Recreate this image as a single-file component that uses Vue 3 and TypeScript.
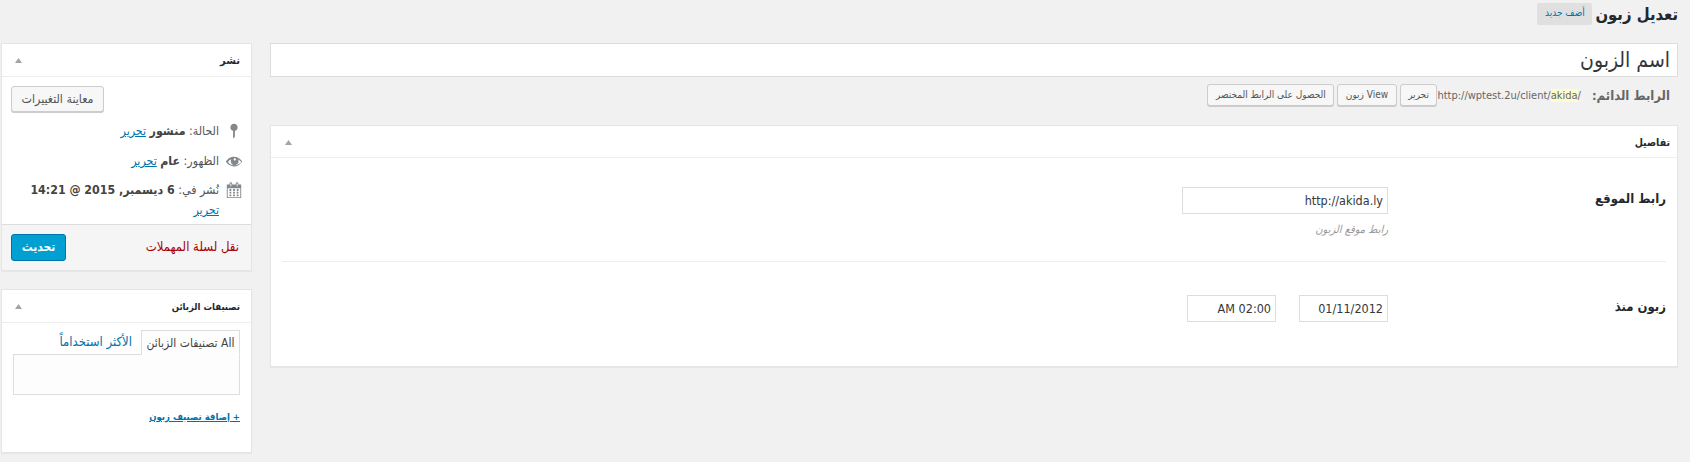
<script setup lang="ts">
const rows = [
  { label: 'رابط الموقع', hint: 'رابط موقع الزبون' },
];
</script>

<template>
  <div class="page" dir="rtl">
    <header class="head">
      <h1 class="title">تعديل زبون</h1>
      <a class="add">أضف جديد</a>
    </header>
    <div class="columns">
      <main class="main">
        <input class="name" type="text" value="اسم الزبون" readonly />
        <div class="perma">
          <strong class="perma-label">الرابط الدائم:</strong>
          <span class="url">http://wptest.2u/client/<span class="slug">akida</span>/</span>
          <div class="perma-btns">
            <a class="btn small">تحرير</a>
            <a class="btn small">View زبون</a>
            <a class="btn small">الحصول على الرابط المختصر</a>
          </div>
        </div>
        <section class="box details">
          <div class="box-head">
            <h2 class="h-main">تفاصيل</h2>
            <svg class="tri" width="7" height="5" viewBox="0 0 10 6" preserveAspectRatio="none"><path d="M5 0 10 6H0Z" /></svg>
          </div>
          <div class="fields">
            <div class="field first" v-for="r in rows" :key="r.label">
              <label class="f-label">{{ r.label }}</label>
              <div class="f-body">
                <input class="inp wide" value="http://akida.ly" readonly />
                <p class="hint">{{ r.hint }}</p>
              </div>
            </div>
            <div class="field second">
              <label class="f-label">زبون منذ</label>
              <div class="f-body dates">
                <input class="inp short" value="01/11/2012" readonly />
                <input class="inp short" value="02:00 AM" readonly />
              </div>
            </div>
          </div>
        </section>
      </main>

      <aside class="side">
        <section class="box publish">
          <div class="box-head side-head">
            <h2 class="h-side">نشر</h2>
            <svg class="tri" width="7" height="5" viewBox="0 0 10 6" preserveAspectRatio="none"><path d="M5 0 10 6H0Z" /></svg>
          </div>
          <div class="preview-row"><a class="btn preview">معاينة التغييرات</a></div>
          <div class="meta status">
            <svg class="ico" width="18" height="18" viewBox="0 0 20 20"><path d="M14 6c0 1.860-1.280 3.410-3 3.860V16c0 1-2 2-2 2V9.860c-1.720-.45-3-2-3-3.860 0-2.210 1.790-4 4-4s4 1.790 4 4z" /></svg>
            <span>الحالة: <b>منشور</b> <a class="link">تحرير</a></span>
          </div>
          <div class="meta vis">
            <svg class="ico" width="18" height="18" viewBox="0 0 20 20"><path d="M18.300 9.500C15 4.900 8.500 3.800 3.900 7.200c-1.200.9-2.200 2.100-3 3.400.2.4.5.8.8 1.200 3.300 4.600 9.600 5.600 14.200 2.300.9-.7 1.700-1.400 2.400-2.300.3-.4.5-.8.8-1.200-.3-.4-.5-.8-.8-1.100zm-8.300-2.200c.5-.5 1.300-.5 1.800 0s.5 1.300 0 1.800-1.300.5-1.800 0-.5-1.300 0-1.800zm0 7.400c-2.700 0-5.200-1.400-6.700-3.700 1-1.300 2.300-2.400 3.800-3-.5.7-.7 1.500-.7 2.300 0 2.400 1.900 4.400 4.300 4.400s4.400-1.900 4.400-4.300c0-.8-.2-1.600-.7-2.300 1.500.7 2.800 1.800 3.800 3-1.900 2.300-4.600 3.700-7.400 3.600h-.2z" /></svg>
            <span>الظهور: <b>عام</b> <a class="link">تحرير</a></span>
          </div>
          <div class="meta date">
            <svg class="ico" width="18" height="18" viewBox="0 0 20 20"><path d="M15 4h3v15H2V4h3V3c0-.41.15-.76.44-1.060.29-.29.65-.44 1.060-.44s.77.15 1.060.44c.29.3.44.65.44 1.060v1h4V3c0-.41.15-.76.44-1.060.29-.29.65-.44 1.060-.44s.77.15 1.060.44c.29.3.44.65.44 1.060v1zM6 3v2.500c0 .14.05.26.15.35.09.1.21.15.35.15s.26-.05.35-.15c.1-.09.15-.21.15-.35V3c0-.14-.05-.26-.15-.35-.09-.1-.21-.15-.35-.15s-.26.05-.35.15c-.1.09-.15.21-.15.35zm7 0v2.500c0 .14.05.26.14.35.1.1.22.15.36.15s.26-.05.36-.15c.09-.09.14-.21.14-.35V3c0-.14-.05-.26-.14-.35-.1-.1-.22-.15-.36-.15s-.26.05-.36.15c-.09.09-.14.21-.14.35zm4 15V8H3v10h14zM7 9v2H5V9h2zm2 0h2v2H9V9zm4 2V9h2v2h-2zm-6 1v2H5v-2h2zm2 0h2v2H9v-2zm4 2v-2h2v2h-2zm-6 1v2H5v-2h2zm4 2H9v-2h2v2zm4 0h-2v-2h2v2z" /></svg>
            <span class="date-text">نُشر في: <b>6 ديسمبر, 2015 @ 14:21</b><br /><a class="link">تحرير</a></span>
          </div>
          <div class="actions">
            <a class="trash">نقل لسلة المهملات</a>
            <a class="update">تحديث</a>
          </div>
        </section>

        <section class="box tax">
          <div class="box-head side-head">
            <h2 class="h-side tax-title">تصنيفات الزبائن</h2>
            <svg class="tri" width="7" height="5" viewBox="0 0 10 6" preserveAspectRatio="none"><path d="M5 0 10 6H0Z" /></svg>
          </div>
          <div class="tax-body">
            <div class="tabs">
              <span class="tab active">All تصنيفات الزبائن</span>
              <a class="tab other">الأكثر استخداماً</a>
            </div>
            <div class="panel"></div>
            <a class="add-term">+ إضافة تصنيف زبون</a>
          </div>
        </section>
      </aside>
    </div>
  </div>
</template>

<style>
html, body { margin: 0; background: #f1f1f1; }
</style>

<style scoped>
.page {
  width: 1690px;
  height: 462px;
  overflow: hidden;
  box-sizing: border-box;
  padding: 0 12px 0 1px;
  font-family: "DejaVu Sans Condensed", "DejaVu Sans", sans-serif;
  font-size: 12px;
  color: #444;
  background: #f1f1f1;
}
a { color: #0073aa; }
.head { display: flex; align-items: center; height: 30px; margin-bottom: 13px; gap: 3px; }
.title { margin: 0; font-size: 16.500px; font-weight: 700; color: #23282d; line-height: 30px; }
.add {
  background: #e0e0e0; border-radius: 2px; font-size: 10px; font-weight: 400;
  width: 55px; height: 22px; line-height: 20px; text-align: center; margin-top: -2px;
}
.columns { display: flex; gap: 18px; align-items: flex-start; }
.main { flex: 1; min-width: 0; }
.side { width: 251px; flex: none; }
.name {
  display: block; width: 100%; box-sizing: border-box; height: 34px;
  border: 1px solid #ddd; padding: 0 7px; font: 21px "DejaVu Sans Condensed", "DejaVu Sans", sans-serif;
  color: #32373c; background: #fff; outline: none; direction: rtl;
}
.perma { display: flex; align-items: center; height: 22px; margin: 7px 8px 19px 0; color: #666; font-size: 12px; }
.perma-label { font-size: 13px; font-weight: 700; color: #666; margin-left: 11px; }
.url { direction: ltr; font-family: "DejaVu Sans Condensed", "Liberation Sans", sans-serif; font-size: 11px; color: #666; unicode-bidi: isolate; }
.slug { background: #fffbcc; }
.perma-btns { display: flex; gap: 3px; }
.btn {
  display: inline-block; box-sizing: border-box; border: 1px solid #ccc; border-radius: 3px;
  background: #f7f7f7; color: #555; text-align: center; box-shadow: 0 1px 0 #ccc;
}
.small { height: 22px; line-height: 20px; font-size: 10px; padding: 0 7.500px; }
.box { background: #fff; border: 1px solid #e5e5e5; box-shadow: 0 1px 1px rgba(0,0,0,.04); box-sizing: border-box; }
.box-head {
  display: flex; align-items: center; justify-content: space-between; height: 32px;
  box-sizing: border-box; border-bottom: 1px solid #eee; padding: 0 7px 0 14px;
}
.h-main { margin: 0; font-size: 10.500px; font-weight: 700; color: #23282d; }
.h-side { margin: 0; font-size: 11px; font-weight: 700; color: #23282d; }
.tax-title { font-size: 9.500px; }
.tri { fill: #a0a5aa; margin-top: 1px; flex: none; }
.details { height: 242px; }
.fields { margin: 0 11px; }
.field { display: flex; }
.first { height: 104px; padding-top: 29px; box-sizing: border-box; border-bottom: 1px solid #eee; }
.second { padding-top: 33px; }
.f-label { width: 278px; flex: none; font-size: 13px; font-weight: 700; color: #23282d; padding-top: 4px; }
.inp {
  display: block; box-sizing: border-box; height: 27px; border: 1px solid #ddd; background: #fff; outline: none;
  padding: 0 4px; font: 12.500px "DejaVu Sans Condensed", "Open Sans", sans-serif; color: #32373c; direction: rtl;
}
.wide { width: 206px; }
.short { width: 89px; }
.hint { margin: 9px 0 0; font-size: 11px; font-style: italic; color: #999; }
.dates { display: flex; gap: 23px; }
.side-head { height: 33px; padding-right: 11px; padding-left: 13px; }
.publish { height: 228px; display: flex; flex-direction: column; margin-bottom: 18px; }
.preview-row { padding: 9px 10px 0 9px; display: flex; justify-content: flex-end; }
.preview { width: 93px; height: 26px; line-height: 24px; font-size: 12.300px; }
.meta { display: flex; gap: 6px; align-items: flex-start; padding: 0 8px; line-height: 20px; font-size: 12.300px; color: #555; }
.ico { fill: #82878c; flex: none; margin-top: 1px; }
.status { margin-top: 9px; }
.vis { margin-top: 10px; }
.date { margin-top: 9px; }
.date-text { line-height: 20px; margin-top: 0; }
.link { text-decoration: underline; }
.meta b { color: #444; }
.actions {
  margin-top: auto; height: 46px; box-sizing: border-box; padding: 9px 10px 0 9px; background: #f5f5f5; border-top: 1px solid #ddd;
  display: flex; justify-content: space-between; align-items: flex-start;
}
.trash { color: #a00; font-size: 13px; margin-top: 5px; margin-right: 2px; }
.update {
  width: 55px; height: 27px; line-height: 25px; box-sizing: border-box; text-align: center;
  background: #00a0d2; border: 1px solid #0073aa; border-radius: 3px; color: #fff; font-size: 12px; font-weight: 700;
}
.tax { height: 164px; }
.tax-body { padding: 7px 11px 0 11px; }
.tabs { display: flex; height: 24px; }
.tab { font-size: 12px; line-height: 24px; box-sizing: border-box; }
.active { width: 99px; border: 1px solid #ddd; border-bottom: 1px solid #fdfdfd; background: #fdfdfd; text-align: center; height: 25px; position: relative; z-index: 1; color: #444; white-space: nowrap; }
.other { flex: 1; padding-right: 9px; white-space: nowrap; font-size: 13px; }
.panel { height: 41px; border: 1px solid #ddd; background: #fdfdfd; box-sizing: border-box; }
.add-term { display: block; margin-top: 16px; font-size: 9.500px; font-weight: 700; text-decoration: underline; }
</style>
